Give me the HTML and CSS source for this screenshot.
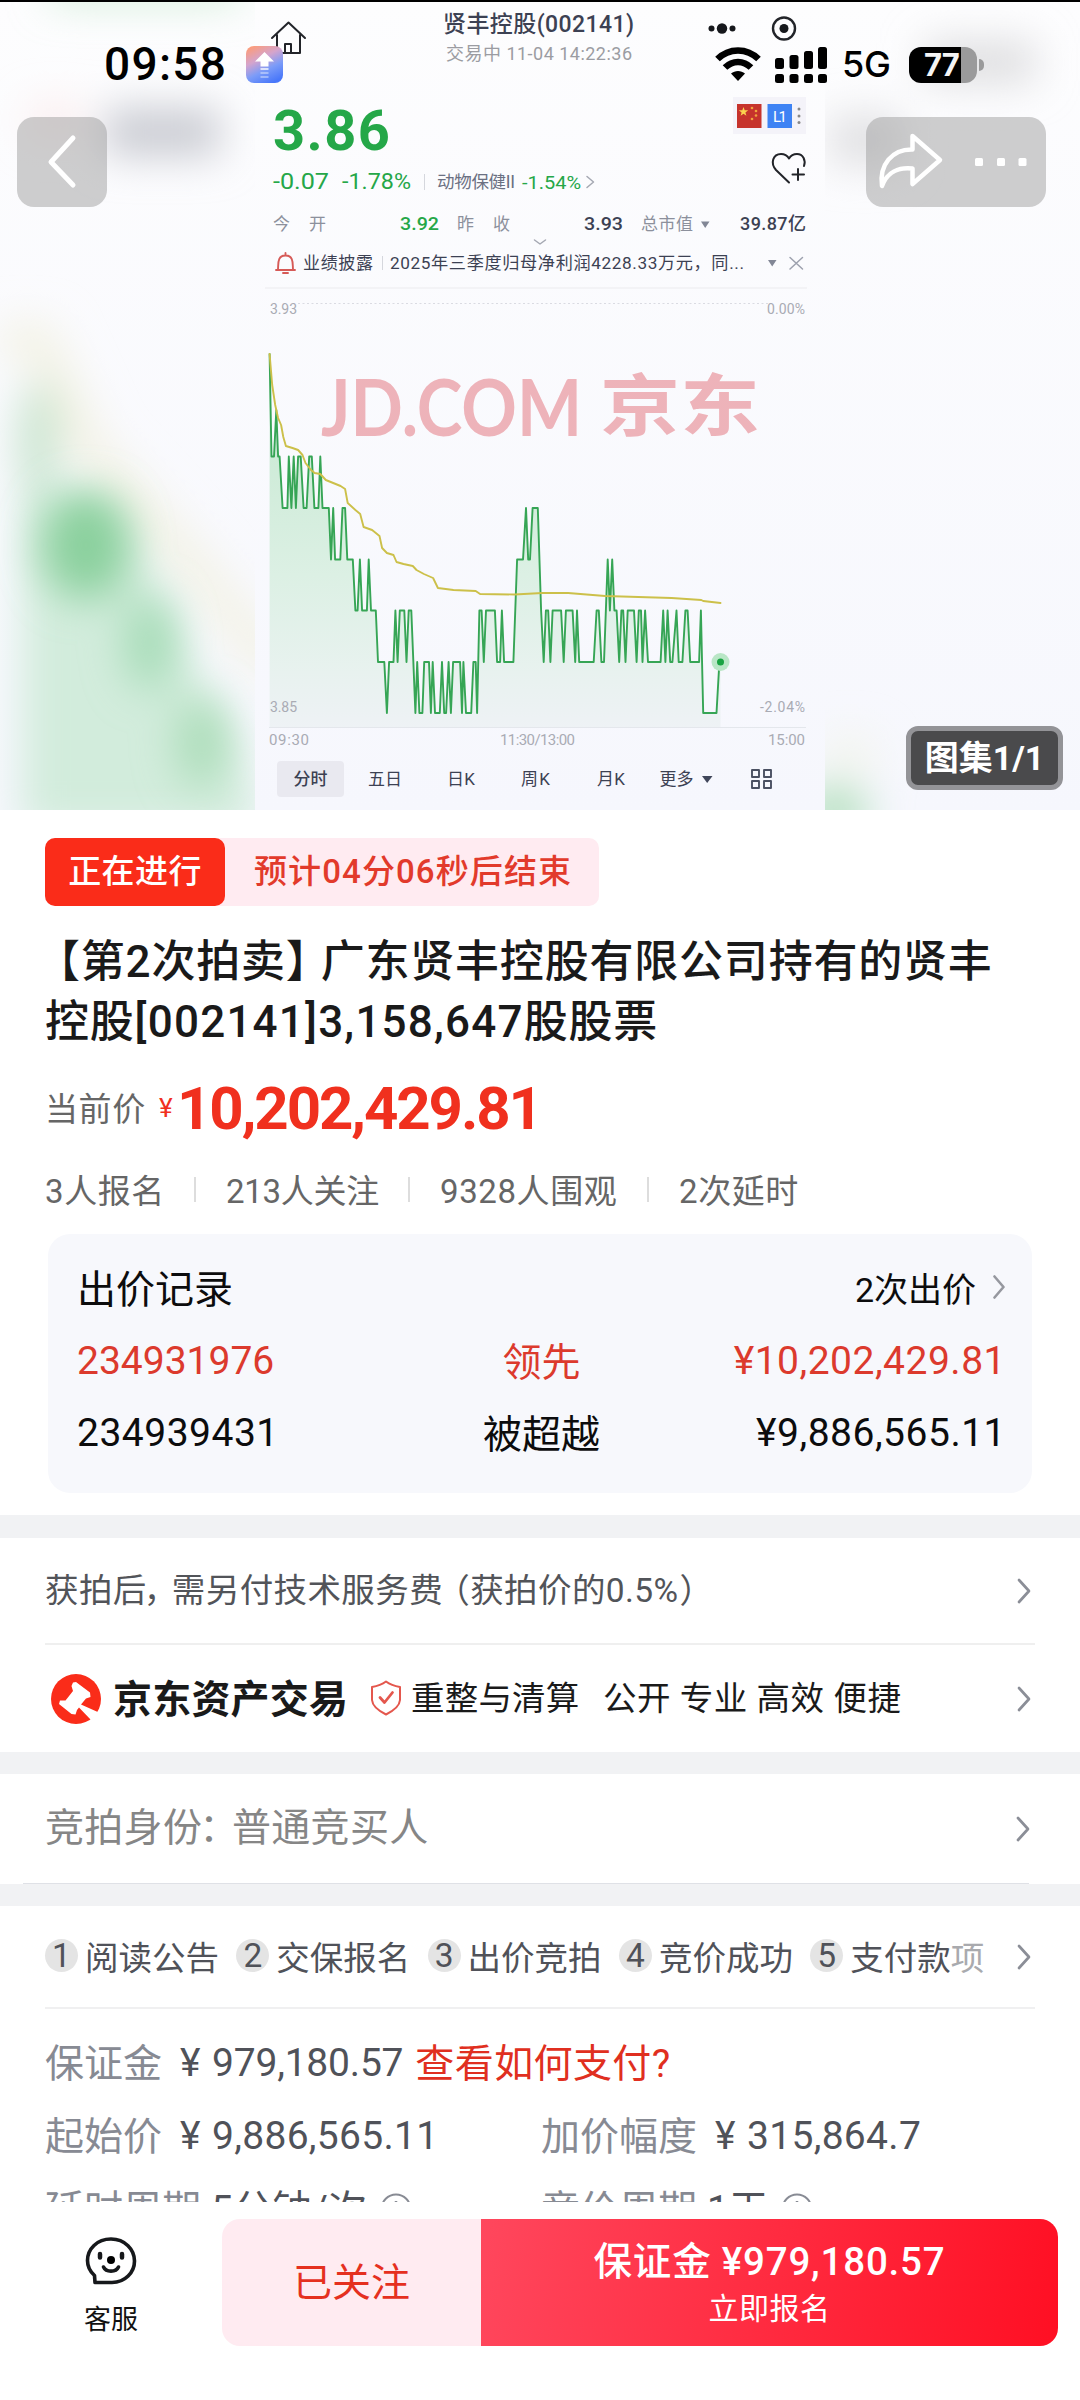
FILE: index.html
```html
<!DOCTYPE html>
<html lang="zh-CN">
<head>
<meta charset="utf-8">
<title>京东资产交易</title>
<link rel="stylesheet" href="styles.css">
</head>
<body>
<div class="page">
  <header class="hero">
    <svg class="hero-art" width="1080" height="810" viewBox="0 0 1080 810">
      <defs>
        <linearGradient id="bg" x1="0" y1="0" x2="0" y2="1"><stop offset="0" stop-color="#fdfdfe"/><stop offset="1" stop-color="#f6f7fd"/></linearGradient>
        <linearGradient id="area" gradientUnits="userSpaceOnUse" x1="0" y1="450" x2="0" y2="728"><stop offset="0" stop-color="#cdebd7"/><stop offset=".45" stop-color="#dcf0e4"/><stop offset=".8" stop-color="#e8f2ef"/><stop offset="1" stop-color="#eef2f5"/></linearGradient>
        <filter id="soft" x="-60%" y="-60%" width="220%" height="220%"><feGaussianBlur stdDeviation="20"/></filter>
        <filter id="soft-s" x="-60%" y="-60%" width="220%" height="220%"><feGaussianBlur stdDeviation="21"/></filter>
      </defs>
      <rect width="1080" height="810" fill="url(#bg)"/>
      <g filter="url(#soft)">
        <path d="M0 340L40 340 90 450 190 560 275 670" fill="none" stroke="#f3f2e4" stroke-width="34"/>
        <path d="M22 400L50 430 60 500 110 500 150 570 190 660 235 740 262 830H22Z" fill="#d2ecdc"/>
        <ellipse cx="38" cy="440" rx="20" ry="60" fill="#c8e4ce"/>
        <rect x="105" y="108" width="115" height="48" fill="#c9cbd2"/>
        <rect x="30" y="105" width="50" height="30" fill="#fbeaea"/>
        <rect x="925" y="42" width="110" height="40" fill="#dcdcde"/>
        <rect x="830" y="115" width="70" height="50" fill="#e0e0e2"/>
        <rect x="50" y="-22" width="190" height="22" fill="#c5e8cd"/>
      </g>
      <g filter="url(#soft-s)">
        <ellipse cx="86" cy="545" rx="44" ry="54" fill="#8ad09d"/>
        <ellipse cx="150" cy="642" rx="26" ry="48" fill="#a6dcb7"/>
        <ellipse cx="202" cy="742" rx="26" ry="46" fill="#acddb9"/>
        <ellipse cx="835" cy="812" rx="34" ry="28" fill="#b5e0bf"/>
        <ellipse cx="850" cy="755" rx="28" ry="18" fill="#f2f4ea"/>
      </g>
      <rect x="255" width="570" height="810" fill="url(#bg)"/>

      <path class="ln dark" d="M272 38L288.500 22.500 305 38M277 35V53H300V35M285 53V44H291V53" stroke-width="2"/>
      <text class="t navy md" x="443" y="32" font-size="23" textLength="191">贤丰控股(002141)</text>
      <text class="t pale" x="446" y="60" font-size="18" textLength="186">交易中 11-04 14:22:36</text>
      <g fill="#16181c"><circle cx="711.500" cy="28.500" r="3"/><circle cx="722" cy="28.500" r="5.200"/><circle cx="732.500" cy="28.500" r="3"/><circle cx="784" cy="28.500" r="4.500"/></g>
      <circle class="ln dark" cx="784" cy="28.500" r="11" stroke-width="2.400"/>
      <text class="t green bd" x="273" y="150" font-size="56" textLength="117">3.86</text>
      <rect x="733" y="97" width="73" height="37" fill="#f4f3f9"/>
      <rect x="737" y="104" width="24.500" height="24" fill="#c6332c"/>
      <path d="M743.500 107l1.200 3.300h3.500l-2.800 2.100 1 3.400-2.900-2-2.900 2 1-3.400-2.800-2.100h3.500z" fill="#fbd34f"/>
      <g fill="#f0a33c"><circle cx="752" cy="108" r="1.300"/><circle cx="756" cy="111" r="1.300"/><circle cx="756" cy="115.500" r="1.300"/><circle cx="752" cy="119" r="1.300"/></g>
      <rect x="767.500" y="104" width="24.500" height="24" fill="#3e83f4"/>
      <text class="t" x="773" y="121.500" font-size="15" textLength="14" fill="#fff">L1</text>
      <g fill="#888"><circle cx="799" cy="109" r="1.500"/><circle cx="799" cy="116" r="1.500"/><circle cx="799" cy="122.500" r="1.500"/></g>
      <path class="ln dark" d="M789 182.500L776 170C770 163 773 154 781 154 785 154 787.500 156 789 158.500 790.500 156 793 154 797 154 803 154 806 160 804 166M798 169V180M792.500 174.500H804" stroke-width="2"/>
      <text class="t green" x="273" y="189" font-size="22" textLength="56" lengthAdjust="spacingAndGlyphs">-0.07</text>
      <text class="t green" x="342" y="189" font-size="22" textLength="69" lengthAdjust="spacingAndGlyphs">-1.78%</text>
      <path d="M424.500 174V190M382.500 256V270" stroke="#d5d7dd"/>
      <text class="t slate" x="437" y="188" font-size="17.500" textLength="78">动物保健II</text>
      <text class="t green" x="522" y="188.500" font-size="19" textLength="59" lengthAdjust="spacingAndGlyphs">-1.54%</text>
      <path class="ln" d="M587 176.500L593.500 182 587 187.500M534.500 240L540 244 545.500 240" stroke="#a5a8b2" stroke-width="1.500"/>
      <text class="t gray" x="273" y="230" font-size="17" letter-spacing="19">今开</text>
      <text class="t green md" x="400" y="230" font-size="19" textLength="39" lengthAdjust="spacingAndGlyphs">3.92</text>
      <text class="t gray" x="457" y="230" font-size="17" letter-spacing="19">昨收</text>
      <text class="t navy md" x="584" y="230" font-size="19" textLength="39" lengthAdjust="spacingAndGlyphs">3.93</text>
      <text class="t gray" x="641" y="230" font-size="17" textLength="52">总市值</text>
      <path d="M701 221.500H709.500L705.200 228Z M768 260H776.500L772.200 266.500Z" fill="#828796"/>
      <text class="t navy md" x="740" y="230" font-size="18" textLength="66">39.87亿</text>
      <path class="ln" d="M276 270H295M278 269C278.500 264 277 255.500 285.500 255.500S292.500 264 293 269M285.500 253V255M283 273H288" stroke="#d65a57" stroke-width="1.900"/>
      <text class="t navy" x="303" y="269" font-size="17" textLength="70">业绩披露</text>
      <text class="t navy" x="390" y="269" font-size="17.200" textLength="354">2025年三季度归母净利润4228.33万元，同...</text>
      <path class="ln" d="M790 257.500L802.500 269M802.500 257.500L790 269" stroke="#9da1ae" stroke-width="1.500"/>
      <path d="M265 288H807" stroke="#f3f3f6" stroke-width="2"/>
      <path d="M298 303.500H770" stroke="#dadbe2" stroke-dasharray="2 2.500"/>

      <path id="fill" fill="url(#area)" d=""/>
      <path id="price" class="ln" stroke="#36a555" stroke-width="1.900" d=""/>
      <path id="avg" class="ln" stroke="#ccc04a" stroke-width="1.900" d=""/>
      <path d="M269 727.500H806" stroke="#e4e7ec"/>
      <circle cx="720.500" cy="662" r="9" fill="#b9e6c6"/><circle cx="720.500" cy="662" r="3.500" fill="#19a342"/>
      <g class="t axis" font-size="14">
        <text x="270" y="314" textLength="27">3.93</text>
        <text x="767" y="314" textLength="38">0.00%</text>
        <text x="270" y="712" textLength="27">3.85</text>
        <text x="760" y="712" textLength="45">-2.04%</text>
        <text x="269" y="744.500" font-size="15" textLength="40">09:30</text>
        <text x="500" y="744.500" font-size="15" textLength="75">11:30/13:00</text>
        <text x="768" y="744.500" font-size="15" textLength="37">15:00</text>
      </g>
      <g class="watermark">
        <text x="321" y="436" class="wm-latin" font-size="79" textLength="261" lengthAdjust="spacingAndGlyphs">JD.COM</text>
        <text x="600" y="430" class="wm-cjk" font-size="67" textLength="160" lengthAdjust="spacingAndGlyphs">京东</text>
      </g>
      <rect x="277" y="761" width="67" height="36" rx="4" fill="#e9e9f0"/>
      <g class="t navy" font-size="17">
        <text class="md" x="293.500" y="785" textLength="34">分时</text>
        <text x="368" y="785" textLength="34">五日</text>
        <text x="447" y="785" textLength="28">日K</text>
        <text x="521" y="785" textLength="29">周K</text>
        <text x="597" y="785" textLength="28">月K</text>
        <text x="659.500" y="785" textLength="34">更多</text>
      </g>
      <path d="M702 776H712.500L707.200 783Z" fill="#40465a"/>
      <path class="ln" d="M752 770H759V777H752ZM764 770H771V777H764ZM752 781H759V788H752ZM764 781H771V788H764Z" stroke="#4a5062" stroke-width="1.900"/>
    </svg>

    <div class="status">
      <div class="status-left">
        <span class="clock">09:58</span>
        <svg width="37" height="37" viewBox="0 0 37 37"><defs><linearGradient id="app" x1=".2" y1="0" x2=".7" y2="1"><stop offset="0" stop-color="#fb9c7c"/><stop offset=".35" stop-color="#d4a4cd"/><stop offset=".65" stop-color="#7c9cf8"/><stop offset="1" stop-color="#4877fa"/></linearGradient></defs><rect width="37" height="37" rx="8" fill="url(#app)"/><path d="M18.500 6L28 15.500H22.500V20.500H14.500V15.500H9Z" fill="#fff"/><path d="M14.500 23H22.500" stroke="#fff" stroke-width="1.800" opacity=".8"/><path d="M14.500 27H22.500M14.500 31H22.500" stroke="#fff" stroke-width="1.500" opacity=".5"/></svg>
      </div>
      <div class="status-right">
        <svg width="46" height="35" viewBox="0 0 46 35"><path d="M2.500 12C14 .5 32 .5 43.500 12" fill="none" stroke="#000" stroke-width="6.500"/><path d="M10 20.500C17.500 13 28.500 13 36 20.500" fill="none" stroke="#000" stroke-width="6.500"/><path d="M16 26.500C20 23 26 23 30 26.500L23 34Z"/></svg>
        <svg width="52" height="36" viewBox="0 0 52 36"><rect y="11" width="9" height="11" rx="2.500"/><rect x="14.500" y="8" width="9" height="14" rx="2.500"/><rect x="29" y="4" width="9" height="18" rx="2.500"/><rect x="43" width="9" height="22" rx="2.500"/><rect y="27" width="9" height="9" rx="2.500"/><rect x="14.500" y="27" width="9" height="9" rx="2.500"/><rect x="29" y="27" width="9" height="9" rx="2.500"/><rect x="43" y="27" width="9" height="9" rx="2.500"/></svg>
        <span class="net">5G</span>
        <div class="battery"><span>77</span></div>
      </div>
    </div>

    <div class="tools">
      <div class="tool"><svg width="90" height="90" viewBox="0 0 90 90"><path d="M56 21L34 45 56 68" class="ln" stroke="#fff" stroke-width="5"/></svg></div>
      <div class="tool wide"><svg width="180" height="90" viewBox="0 0 180 90"><path class="ln" stroke="#fff" stroke-width="4.500" d="M46.500 19L74 43 46.500 67V51.500C33 50 21 55 16 69 13 48 26 32 46.500 32.500Z"/><g fill="#fff"><rect x="109" y="41" width="8" height="8" rx="1.500"/><rect x="131" y="41" width="8" height="8" rx="1.500"/><rect x="152.500" y="41" width="8" height="8" rx="1.500"/></g></svg></div>
    </div>
    <div class="album">图集1/1</div>
  </header>

  <main>
    <section class="info">
      <div class="tag"><b>正在进行</b><span>预计04分06秒后结束</span></div>
      <h1><span class="open">【</span>第2次拍卖<span class="close">】</span>广东贤丰控股有限公司持有的贤丰<br>控股<span class="code">[002141]3,158,647</span>股股票</h1>
      <div class="price"><span>当前价</span><i>¥</i><strong>10,202,429.81</strong></div>
      <div class="stats"><span class="n2">3人报名</span><em></em><span class="n3">213人关注</span><em></em><span class="n4">9328人围观</span><em></em><span>2次延时</span></div>
      <div class="bids">
        <div class="bid-head"><span>出价记录</span><a>2次出价<svg width="12" height="24" viewBox="0 0 12 24"><path class="ln" d="M1.500 1.500L10.500 12 1.500 22.500" stroke="#96989f" stroke-width="2.600"/></svg></a></div>
        <div class="bid lead"><span>234931976</span><span>领先</span><span>¥10,202,429.81</span></div>
        <div class="bid"><span class="wide-id">234939431</span><span>被超越</span><span>¥9,886,565.11</span></div>
      </div>
    </section>

    <section class="group">
      <div class="row fee"><span>获拍后<u class="comma">，</u>需另付技术服务费<u class="lp">（</u>获拍价的0.5%<u>）</u></span><svg class="go" width="14" height="26" viewBox="0 0 14 26"><path class="ln" d="M2 2L12 13 2 24" stroke="#8b8e97" stroke-width="2.700"/></svg></div>
      <div class="row brand">
        <svg width="52" height="52" viewBox="0 0 52 52"><circle cx="26" cy="26" r="25" fill="#fa2c19"/><path d="M23 9.500L26 9 40 19.500 40.500 24 36 25.500 31 31.500 50 40 41 47 29 34.500 27 37 25.500 41.500 21.500 41 9 31 10 27.500 15.500 27.500 23 18 21.500 13Z" fill="#fff"/></svg>
        <b>京东资产交易</b>
        <svg class="shield" width="32" height="36" viewBox="0 0 32 36"><path class="ln" stroke="#e4574d" stroke-width="2" d="M16 1.500C20 4.500 24 6 30 7V20C29.500 27 22 31.500 16 34.500 10 31.500 2.500 27 2 20V7C8 6 12 4.500 16 1.500Z"/><path class="ln" stroke="#e4574d" stroke-width="2.800" d="M10 17.500L14.500 22.500 22.500 12.500"/></svg>
        <span class="kind">重整与清算</span><span class="kw">公开 专业 高效 便捷</span>
        <svg class="go" width="14" height="26" viewBox="0 0 14 26"><path class="ln" d="M2 2L12 13 2 24" stroke="#8b8e97" stroke-width="2.700"/></svg>
      </div>
    </section>

    <section class="group identity">
      <div class="row"><span>竞拍身份<u>：</u>普通竞买人</span><svg class="go" width="14" height="26" viewBox="0 0 14 26"><path class="ln" d="M2 2L12 13 2 24" stroke="#8b8e97" stroke-width="2.700"/></svg></div>
    </section>

    <section class="group terms">
      <div class="row steps">
        <ol><li><i>1</i>阅读公告</li><li><i>2</i>交保报名</li><li><i>3</i>出价竞拍</li><li><i>4</i>竞价成功</li><li><i>5</i>支付款<span>项</span></li></ol>
        <svg class="go" width="14" height="26" viewBox="0 0 14 26"><path class="ln" d="M2 2L12 13 2 24" stroke="#8b8e97" stroke-width="2.700"/></svg>
      </div>
      <div class="facts">
        <div class="fact full"><label>保证金</label><i>¥</i><b class="sum">979,180.57</b><a>查看如何支付?</a></div>
        <div class="fact"><label>起始价</label><i>¥</i><b>9,886,565.11</b></div>
        <div class="fact"><label>加价幅度</label><i>¥</i><b>315,864.7</b></div>
        <div class="fact period"><label>延时周期</label><b>5分钟/次</b><svg width="32" height="32" viewBox="0 0 32 32"><circle cx="16" cy="16" r="14.500" class="ln" stroke="#888b94" stroke-width="2"/><path d="M16 8V10M16 14V24" stroke="#888b94" stroke-width="2.500"/></svg></div>
        <div class="fact period"><label>竞价周期</label><b>1天</b><svg width="32" height="32" viewBox="0 0 32 32"><circle cx="16" cy="16" r="14.500" class="ln" stroke="#888b94" stroke-width="2"/><path d="M16 8V10M16 14V24" stroke="#888b94" stroke-width="2.500"/></svg></div>
      </div>
    </section>
  </main>

  <footer class="bar">
    <div class="service">
      <svg width="52" height="48" viewBox="0 0 52 48"><path class="ln" stroke="#16181b" stroke-width="3.600" d="M10 45.500H27C40 45.500 49.500 35.500 49.500 24S40 2 26 2 2.500 12 2.500 23.500C2.500 30 5 34.500 9.500 38.500Z"/><path class="ln" stroke="#16181b" stroke-width="3.600" d="M18.500 30C21 35.500 31 35.500 33.500 30"/><path d="M15 17V20.500M37 17V20.500" class="ln" stroke="#16181b" stroke-width="4.500"/><circle cx="26" cy="23" r="4"/></svg>
      <span>客服</span>
    </div>
    <div class="actions">
      <button class="follow">已关注</button>
      <button class="join"><b>保证金 ¥979,180.57</b><span>立即报名</span></button>
    </div>
  </footer>
</div>
<script src="chart.js"></script>
</body>
</html>
```
FILE: chart.js
```js
// Intraday curve: [x, level] pairs; each level is one price tick.
const tick = [354, 456.5, 508, 559.5, 610.5, 662, 713];
const px = x => (250 + x * 0.36992).toFixed(1);
const price = [
  [53,0],[58,1],[65,1],[71,.55],[76,1],[80,1],[88,2],[101,2],[105,1],[112,2],[118,1],[124,2],[130,1],[137,1],[145,2],[153,2],[160,1],[167,1],[174,2],[185,2],[190,1],[196,2],[213,2],[219,3],[225,2],[230,3],[244,3],[250,2],[257,2],[263,3],[278,3],
  [285,4],[291,4],[297,3],[303,4],[316,4],[321,3],[327,4],[340,4],[346,5],[363,5],[370,6],[376,5],[388,5],[393,4],[399,5],[405,4],[417,4],[423,5],[429,4],[436,4],[447,6],[452,5],[458,6],[466,6],[471,5],[484,5],[489,6],[494,5],[500,6],[513,6],[519,5],[525,6],[530,6],[537,5],[543,6],[549,5],[568,5],[573,6],[577,5],[584,6],[598,6],[604,5],[610,5],[614,6],
  [620,4],[626,4],[632,5],[638,4],[662,4],[668,5],[676,5],[681,4],[687,5],[712,5],[722,3],[738,3],[746,2],[752,3],[757,3],[764,2],[778,2],[787,4],[794,5],[800,4],[806,4],[812,5],[818,4],[841,4],[848,5],[854,4],[872,4],[879,5],[884,4],[890,5],[929,5],[937,4],[943,4],[950,5],[957,5],[967,3],[973,4],[979,3],[985,4],[991,4],[998,5],[1004,4],[1009,4],[1015,5],[1021,4],[1038,4],[1045,5],[1051,4],[1057,4],[1061,5],[1068,4],[1076,5],
  [1110,5],[1117,4],[1123,5],[1129,4],[1136,5],[1142,5],[1153,4],[1159,5],[1169,5],[1177,4],[1183,4],[1190,5],[1214,5],[1219,4],[1225,6],[1261,6],[1269,5],[1272,5]
];
const avg = [
  [53,354],[60,385],[68,405],[76,418],[84,425],[90,437],[97,446],[115,448],[130,450],[142,455],[150,463],[165,470],[175,473],[190,474],[205,480],[225,483],[245,486],[257,489],[264,503],[285,510],[298,514],[307,527],[330,530],[350,536],[357,548],[370,553],[388,555],[396,562],[415,564],[440,566],[450,570],[470,574],[495,578],[508,588],[550,590],[610,591],[622,594],[715,594.5],[790,593],[860,593],[960,596],[1140,598],[1220,600],[1225,601],[1272,603]
];
const path = pts => 'M' + pts.map(([x, y]) => px(x) + ' ' + y).join('L');
const levels = price.map(([x, l]) => [x, l === 0.55 ? 410 : tick[l]]);
document.getElementById('price').setAttribute('d', path(levels));
document.getElementById('avg').setAttribute('d', path(avg));
document.getElementById('fill').setAttribute('d', path([...levels, [1272, 727], [53, 727]]) + 'Z');
```
FILE: styles.css
```css
* { box-sizing: border-box; }
body { margin: 0; background: #fff; font-family: Roboto, "Noto Sans CJK SC", sans-serif; color: #1a1a1c; }
i, u, em { font-style: normal; text-decoration: none; }
h1, ol { margin: 0; padding: 0; }
button { border: 0; font-family: inherit; padding: 0; }
svg { display: block; flex: none; }
.page { width: 1080px; height: 2400px; overflow: hidden; display: flex; flex-direction: column; }
.ln { fill: none; stroke-linecap: round; stroke-linejoin: round; }
.dark { stroke: #222429; }

/* hero picture */
.hero { position: relative; height: 810px; flex: none; border-top: 2px solid #000; overflow: hidden; padding-top: 44px; }
.hero-art { position: absolute; left: 0; top: -2px; z-index: -1; }
.hero-art .t { font-family: Roboto, "Noto Sans CJK SC", sans-serif; }
.navy { fill: #3c4153; }
.slate { fill: #6b7082; }
.gray { fill: #8c909c; }
.pale { fill: #9b9ca2; }
.axis { fill: #a9abb4; }
.green { fill: #25a748; }
.md { font-weight: 500; }
.bd { font-weight: 700; }
.watermark { fill: #e88e96; opacity: .65; }
.wm-latin { font-family: Lato, sans-serif; font-weight: 700; }
.wm-cjk { font-family: "Noto Sans CJK SC", sans-serif; font-weight: 700; }

.status { height: 37px; display: flex; justify-content: space-between; padding: 0 103px 0 104px; }
.status-left, .status-right { display: flex; align-items: center; }
.status-left { gap: 18px; }
.clock { font-size: 46px; line-height: 37px; font-weight: 500; letter-spacing: 1.3px; color: #000; width: 124px; }
.status-right svg + svg { margin-left: 14px; }
.net { width: 58px; margin-left: 15px; font: 500 36px/37px Inter, sans-serif; color: #000; letter-spacing: -.3px; }
.battery { position: relative; width: 68px; height: 36px; margin-left: 9px; border-radius: 12px; background: linear-gradient(90deg, #000 52px, #9a9a9b 52px); color: #f4f4f4; display: flex; align-items: center; padding-left: 15px; font: 700 31px/36px Inter, sans-serif; letter-spacing: -1px; }
.battery::after { content: ""; position: absolute; left: 70px; top: 12px; width: 5px; height: 12px; border-radius: 0 6px 6px 0; background: #9a9a9b; }
.tools { display: flex; justify-content: space-between; padding: 34px 34px 0 17px; }
.tool { width: 90px; height: 90px; border-radius: 17px; background: rgba(150, 150, 150, .46); }
.wide { width: 180px; }
.album { position: absolute; right: 17px; bottom: 20px; width: 157px; height: 64px; border: 5px solid #939397; border-radius: 12px; background: #4a4a4c; color: #fff; font-size: 34px; font-weight: 700; line-height: 54px; text-align: center; white-space: nowrap; }

/* lot summary */
.info { height: 705px; padding: 28px 48px 0 45px; }
.tag { display: inline-flex; height: 68px; border-radius: 10px; background: #ffebf1; color: #e23a2b; font-size: 33px; line-height: 67px; width: 554px; font-weight: 500; }
.tag b { width: 180px; border-radius: 10px; background: #fa2c19; color: #fff; font-weight: 500; text-align: center; letter-spacing: .4px; }
.tag span { padding-left: 29px; white-space: nowrap; letter-spacing: 1.1px; }
h1 { margin-top: 26px; font-size: 44px; line-height: 60px; font-weight: 500; letter-spacing: .8px; white-space: nowrap; color: #1a1a1a; }
.open, .close, u { font-feature-settings: "halt"; }
.open { padding-left: 13px; }
.close { padding-right: 12px; }
.code { letter-spacing: 1.2px; }
.price { display: flex; align-items: center; height: 60px; margin-top: 26px; color: #f0301e; }
.price span { font-size: 33px; color: #666; width: 114px; padding-bottom: 2px; letter-spacing: .6px; }
.price i { font-size: 26px; width: 18px; }
.price strong { font-size: 60px; font-weight: 700; letter-spacing: -2.1px; }
.stats { display: flex; align-items: center; height: 40px; margin-top: 31px; gap: 30px; font-size: 33px; letter-spacing: .6px; color: #666; white-space: nowrap; }
.stats em { width: 2px; height: 25px; background: #ddd; }
.n2 { width: 119px; }
.n3 { width: 152px; letter-spacing: -.3px; }
.n4 { width: 177px; }
.bids { height: 259px; margin: 25px 0 0 3px; padding: 19px 26px 0 29px; width: 984px; border-radius: 22px; background: #f7f8fc; color: #0c0c0d; font-size: 39px; }
.bid-head, .bid { display: flex; align-items: center; justify-content: space-between; height: 72px; }
.bid-head { padding-bottom: 4px; margin-right: 1px; }
.bid-head > span { padding-bottom: 2px; }
.bid-head a { display: flex; align-items: center; gap: 17px; font-size: 34px; }
.bid { display: grid; grid-template-columns: 1fr 120px 1fr; }
.bid span:nth-child(2) { text-align: center; padding-bottom: 5px; }
.bid span:nth-child(3) { text-align: right; letter-spacing: .5px; }
.bid .wide-id { letter-spacing: .5px; }
.lead { color: #dc3a2d; }

/* rows */
.group { border-top: 23px solid #f1f2f4; padding: 0 45px; }
.row { display: flex; align-items: center; }
.go { margin: 0 4px 0 auto; }
.row > span, .row > b { padding-bottom: 6px; }
.fee { height: 107px; border-bottom: 2px solid #efefef; font-size: 33.500px; color: #525459; letter-spacing: .4px; white-space: nowrap; }
.comma { margin-left: -3px; padding-right: 11px; }
.lp { padding-left: 10px; }
.fee u:last-child { padding-left: 1px; }
.brand { height: 107px; padding-left: 5px; color: #1a1a1a; white-space: nowrap; }
.brand b { margin-left: 11px; font-size: 39px; width: 245px; letter-spacing: .2px; }
.shield { margin: 0 0 2px 12px; }
.kind { font-size: 33.500px; margin-left: 9px; width: 192px; letter-spacing: .2px; }
.kw { font-size: 33.500px; letter-spacing: .5px; }
.identity { border-top-width: 22px; padding: 0; }
.identity .row { height: 110px; margin: 0 51px 0 23px; padding-left: 22px; border-bottom: 1px solid #dfe1e6; color: #868686; font-size: 39px; letter-spacing: .3px; white-space: nowrap; }
.identity .row > span { padding-bottom: 10px; }
.identity .go { margin-right: -1px; }
.identity u { margin-left: -3px; padding-right: 13px; }
.terms { border-top-width: 22px; color: #505259; }
.steps { height: 103px; border-bottom: 2px solid #f0f0f1; }
ol { display: flex; list-style: none; font-size: 33.500px; white-space: nowrap; padding-bottom: 2px; }
li { display: flex; align-items: center; width: 191.300px; flex: none; }
li i { width: 33px; height: 33px; margin-right: 7px; border-radius: 50%; background: #e4e4e4; text-align: center; line-height: 34px; }
li span { color: #a9aaae; }
ol li:last-child { width: 175px; }
.facts { display: grid; grid-template-columns: 496px 1fr; grid-auto-rows: 73px; padding-top: 17px; }
.fact { display: flex; align-items: center; font-size: 39px; white-space: nowrap; }
.full { grid-column: 1 / 3; }
.fact label { color: #878a93; margin-right: 18px; padding-bottom: 5px; }
.fact b { font-weight: 400; letter-spacing: .3px; }
.fact .sum { letter-spacing: -.2px; }
.fact i { width: 32px; }
.fact a { margin-left: 12px; color: #e02f20; padding-bottom: 5px; letter-spacing: .4px; }
.period label { margin-right: 10px; }
.period b { padding-bottom: 5px; }
.period svg { margin-left: 12px; }

/* action bar */
.bar { position: absolute; left: 0; top: 2202px; width: 1080px; height: 198px; background: #fff; display: flex; padding-top: 17px; }
.service { width: 222px; display: flex; flex-direction: column; align-items: center; padding-top: 18px; gap: 13px; font-size: 27px; color: #111; }
.actions { width: 836px; height: 127px; display: flex; border-radius: 18px; overflow: hidden; }
.follow { width: 259px; background: #ffebf1; color: #e5301f; font-size: 39px; padding-bottom: 7px; }
.join { flex: 1; display: flex; flex-direction: column; align-items: center; background: linear-gradient(100deg, #ff475d, #ff0f23); color: #fff; padding-top: 18px; }
.join b { font-size: 38.500px; line-height: 49px; font-weight: 500; letter-spacing: .8px; }
.join span { font-size: 30px; line-height: 45px; letter-spacing: .5px; }
```
